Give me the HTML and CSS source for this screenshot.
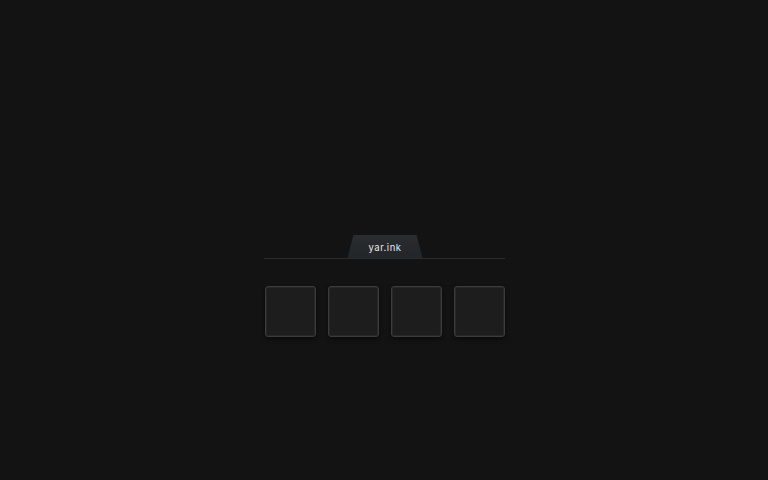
FILE: index.html
```html
<!DOCTYPE html>
<html>
<head>
<meta charset="utf-8">
<link rel="stylesheet" href="styles.css">
</head>
<body>
<main class="stage">
  <section class="panel">
    <header class="tabbar">
      <div class="tab">yar.ink</div>
    </header>
    <div class="slots">
      <div class="slot"></div>
      <div class="slot"></div>
      <div class="slot"></div>
      <div class="slot"></div>
    </div>
  </section>
</main>
</body>
</html>
```
FILE: styles.css
```css
html, body {
  margin: 0;
  padding: 0;
  background: #131313;
  height: 100%;
}
.stage {
  display: flex;
  justify-content: center;
  padding-top: 235px;
  padding-left: 1px;
}
.panel {
  width: 241px;
  display: flex;
  flex-direction: column;
}
.tabbar {
  display: flex;
  justify-content: center;
  border-bottom: 1px solid #2c2c2c;
  height: 23px;
}
.tab {
  width: 75px;
  height: 23px;
  margin-left: 1px;
  background: linear-gradient(#2a2d30, #232629);
  clip-path: polygon(6px 0, 69px 0, 75px 23px, 0 23px);
  color: #e6e7e8;
  font-family: "Inter", "DejaVu Sans", sans-serif;
  font-size: 9.5px;
  font-weight: 400;
  letter-spacing: 0.5px;
  display: flex;
  align-items: center;
  justify-content: center;
  padding-top: 1px;
  box-sizing: border-box;
}
.slots {
  display: flex;
  gap: 12px;
  margin-top: 27px;
  padding-left: 1px;
}
.slot {
  width: 51px;
  height: 51px;
  box-sizing: border-box;
  border: 1px solid #3c3c3c;
  border-radius: 3px;
  background: #1d1d1d;
  box-shadow: inset 0 0 0 1px #272727, 0 2px 4px rgba(0,0,0,0.5);
}
```
